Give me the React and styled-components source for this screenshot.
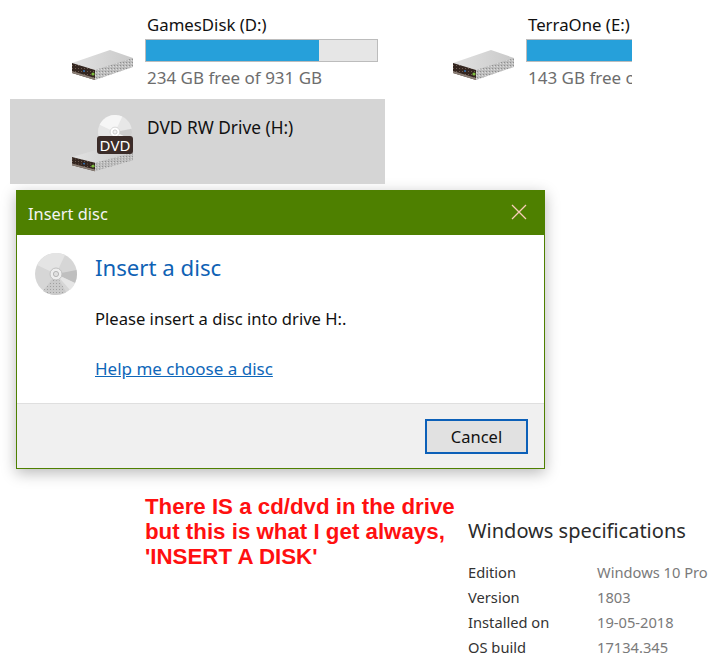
import React from 'react';
import styled, { createGlobalStyle } from 'styled-components';

const GlobalStyle = createGlobalStyle`
  html, body {
    margin: 0;
    padding: 0;
    background: #fff;
  }
`;

const Page = styled.div`
  width: 710px;
  height: 665px;
  overflow: hidden;
  background: #fff;
  font-family: "Noto Sans", "Open Sans", sans-serif;
`;

const DriveList = styled.div`
  display: flex;
  flex-wrap: wrap;
  width: 640px;
  padding: 14px 0 0 10px;
  column-gap: 6px;
`;

const Tile = styled.div`
  display: flex;
  align-items: flex-start;
  box-sizing: border-box;
  flex: none;
  width: ${p => p.$width}px;
  height: 85px;
  padding: ${p => (p.$selected ? 14 : 0)}px 0 0 62px;
  overflow: hidden;
  background: ${p => (p.$selected ? '#d5d5d5' : 'transparent')};
`;

const IconBox = styled.div`
  position: relative;
  flex: none;
  width: 62px;
  height: ${p => (p.$dvd ? 59 : 31)}px;
  margin: ${p => (p.$dvd ? 0 : 36)}px 11px 0 0;
`;

const DriveSlot = styled.div`
  position: absolute;
  left: 0;
  bottom: 0;
  line-height: 0;
`;

const DvdDisc = styled.div`
  position: absolute;
  left: 26px;
  top: 2px;
  line-height: 0;
  filter: brightness(1.08);
`;

const DvdBadge = styled.span`
  position: absolute;
  left: 25px;
  top: 23px;
  width: 36px;
  height: 18px;
  border-radius: 3px;
  background: #3b2c29;
  color: #fff;
  font-size: 15px;
  line-height: 18px;
  text-align: center;
`;

const DriveText = styled.div`
  flex: none;
  width: 233px;
  padding-top: ${p => (p.$selected ? 4 : 0)}px;
`;

const DriveName = styled.div`
  padding-left: 2px;
  color: #111;
  font-size: ${p => (p.$selected ? 17.3 : 16.8)}px;
  line-height: 22px;
  white-space: nowrap;
`;

const Bar = styled.div`
  box-sizing: border-box;
  height: 23px;
  margin-top: 3px;
  border: 1px solid #bcbcbc;
  background: #e6e6e6;
`;

const BarFill = styled.div`
  height: 100%;
  background: #26a0da;
`;

const FreeText = styled.div`
  margin-top: 5px;
  padding-left: 2px;
  color: #6d6d6d;
  font-size: 17px;
  line-height: 22px;
  white-space: nowrap;
`;

const Dialog = styled.div`
  box-sizing: border-box;
  display: flex;
  flex-direction: column;
  width: 529px;
  height: 279px;
  margin: 6px 0 0 16px;
  border: 1px solid #4e8000;
  background: #fff;
  box-shadow: 0 4px 14px rgba(0, 0, 0, 0.28);
`;

const TitleBar = styled.div`
  display: flex;
  align-items: center;
  justify-content: space-between;
  flex: none;
  height: 44px;
  padding: 0 17px 0 11px;
  background: #4e8000;
  color: #f4f4f4;
  font-size: 16.4px;
`;

const CloseIcon = styled.svg`
  display: block;
  width: 16px;
  height: 16px;
  margin-top: -2px;
`;

const DialogBody = styled.div`
  display: flex;
  flex: 1;
  padding: 18px 0 0 18px;
`;

const DiscSlot = styled.div`
  flex: none;
  width: 42px;
  height: 42px;
  margin-right: 18px;
`;

const BodyText = styled.div`
  display: flex;
  flex-direction: column;
`;

const Heading = styled.div`
  color: #0f62b5;
  font-size: 22.2px;
  line-height: 30px;
`;

const Message = styled.div`
  margin-top: 25px;
  color: #111;
  font-size: 16.6px;
  line-height: 22px;
`;

const HelpLink = styled.a`
  margin-top: 28px;
  color: #0f67b9;
  font-size: 17px;
  line-height: 22px;
  text-decoration: underline;
`;

const Footer = styled.div`
  display: flex;
  align-items: center;
  justify-content: flex-end;
  box-sizing: border-box;
  flex: none;
  height: 65px;
  padding-right: 16px;
  border-top: 1px solid #dfdfdf;
  background: #f0f0f0;
`;

const CancelButton = styled.button`
  box-sizing: border-box;
  width: 103px;
  height: 35px;
  padding: 0;
  border: 2px solid #0c60b8;
  background: #e1e1e1;
  color: #111;
  font-family: inherit;
  font-size: 16.5px;
`;

const BottomRow = styled.div`
  display: flex;
  align-items: flex-start;
  padding-left: 145px;
`;

const Note = styled.div`
  flex: none;
  width: 323px;
  margin-top: 25px;
  color: #ff1010;
  font-family: "Liberation Sans", Arial, sans-serif;
  font-size: 22.3px;
  font-weight: 700;
  line-height: 25px;
  white-space: nowrap;
`;

const Specs = styled.div`
  flex: none;
  width: 242px;
  margin-top: 49px;
`;

const SpecsTitle = styled.div`
  color: #2b2b2b;
  font-size: 20px;
  line-height: 26px;
  white-space: nowrap;
`;

const SpecsGrid = styled.div`
  display: grid;
  grid-template-columns: 129px 1fr;
  grid-auto-rows: 25px;
  margin-top: 16px;
  font-size: 14.7px;
  line-height: 25px;
  white-space: nowrap;
`;

const SpecLabel = styled.div`
  color: #333;
`;

const SpecValue = styled.div`
  color: #7a7a7a;
`;

const DriveGraphic = ({ height }) => (
  <svg width="62" height={height} viewBox="0 0 62 31" preserveAspectRatio="none">
    <defs>
      <pattern id="speckle" width="3" height="3" patternUnits="userSpaceOnUse">
        <rect width="3" height="3" fill="#bdbdbd" />
        <rect width="1" height="1" fill="#8f8f8f" />
        <rect x="2" y="1" width="1" height="1" fill="#dcdcdc" />
      </pattern>
      <pattern id="vents" width="3" height="3" patternUnits="userSpaceOnUse">
        <rect width="3" height="3" fill="#33251f" />
        <rect width="1" height="1" fill="#6e5c52" />
      </pattern>
      <linearGradient id="driveTop" x1="0" y1="0" x2="1" y2="0">
        <stop offset="0" stopColor="#e2e2e2" />
        <stop offset="1" stopColor="#c9c9c9" />
      </linearGradient>
    </defs>
    <polygon points="0,13 38,0 61,8 61,10 23,21 0,14" fill="url(#driveTop)" />
    <polygon points="0,13 23,20 23,30 0,23" fill="url(#vents)" />
    <polygon points="0,21 23,28 23,30 0,23" fill="#8d8178" />
    <polygon points="23,20 61,8 61,17 23,30" fill="url(#speckle)" />
    <circle cx="21" cy="24" r="1.6" fill="#7fbf3f" />
    <circle cx="12" cy="21" r="1" fill="#2d6fb5" />
  </svg>
);

const DiscGraphic = ({ size = 42 }) => (
  <svg width={size} height={size} viewBox="0 0 42 42" style={{ display: 'block' }}>
    <defs>
      <pattern id="discDither" width="3" height="3" patternUnits="userSpaceOnUse">
        <rect width="3" height="3" fill="#cacaca" />
        <rect width="1" height="1" fill="#a0a0a0" />
      </pattern>
    </defs>
    <circle cx="21" cy="21" r="21" fill="#d6d6d6" />
    <path d="M21 21 L2 12 A21 21 0 0 1 30 2 Z" fill="#e4e4e4" />
    <path d="M21 21 L8 38 A21 21 0 0 0 31 39 Z" fill="url(#discDither)" />
    <path d="M21 21 L41.5 17 A21 21 0 0 1 40 30 Z" fill="#bfbfbf" />
    <path d="M21 21 L40 30 A21 21 0 0 1 35 37 Z" fill="#e6e6e6" />
    <circle cx="21" cy="21" r="6" fill="#eeeeee" stroke="#c0c0c0" strokeWidth="1" />
    <circle cx="21" cy="21" r="2.6" fill="#e0e0e0" stroke="#a8a8a8" strokeWidth="0.8" />
  </svg>
);

const drives = [
  { name: 'GamesDisk (D:)', free: 234, total: 931, width: 375 },
  { name: 'TerraOne (E:)', free: 143, total: 931, width: 241 },
];

const specs = [
  ['Edition', 'Windows 10 Pro'],
  ['Version', '1803'],
  ['Installed on', '19-05-2018'],
  ['OS build', '17134.345'],
];

export default function App() {
  return (
    <Page>
      <GlobalStyle />
      <DriveList>
        {drives.map(drive => (
          <Tile key={drive.name} $width={drive.width}>
            <IconBox>
              <DriveSlot>
                <DriveGraphic height={31} />
              </DriveSlot>
            </IconBox>
            <DriveText>
              <DriveName>{drive.name}</DriveName>
              <Bar>
                <BarFill style={{ width: `${(1 - drive.free / drive.total) * 100}%` }} />
              </Bar>
              <FreeText>{drive.free} GB free of {drive.total} GB</FreeText>
            </DriveText>
          </Tile>
        ))}
        <Tile $width={375} $selected>
          <IconBox $dvd>
            <DvdDisc>
              <DiscGraphic size={34} />
            </DvdDisc>
            <DriveSlot>
              <DriveGraphic height={26} />
            </DriveSlot>
            <DvdBadge>DVD</DvdBadge>
          </IconBox>
          <DriveText $selected>
            <DriveName $selected>DVD RW Drive (H:)</DriveName>
          </DriveText>
        </Tile>
      </DriveList>

      <Dialog>
        <TitleBar>
          Insert disc
          <CloseIcon viewBox="0 0 16 16">
            <path d="M1 1 L15 15 M15 1 L1 15" stroke="#f9cdb8" strokeWidth="1.3" fill="none" />
          </CloseIcon>
        </TitleBar>
        <DialogBody>
          <DiscSlot>
            <DiscGraphic />
          </DiscSlot>
          <BodyText>
            <Heading>Insert a disc</Heading>
            <Message>Please insert a disc into drive H:.</Message>
            <HelpLink href="#">Help me choose a disc</HelpLink>
          </BodyText>
        </DialogBody>
        <Footer>
          <CancelButton>Cancel</CancelButton>
        </Footer>
      </Dialog>

      <BottomRow>
        <Note>
          There IS a cd/dvd in the drive
          <br />
          but this is what I get always,
          <br />
          'INSERT A DISK'
        </Note>
        <Specs>
          <SpecsTitle>Windows specifications</SpecsTitle>
          <SpecsGrid>
            {specs.map(([label, value]) => (
              <React.Fragment key={label}>
                <SpecLabel>{label}</SpecLabel>
                <SpecValue>{value}</SpecValue>
              </React.Fragment>
            ))}
          </SpecsGrid>
        </Specs>
      </BottomRow>
    </Page>
  );
}
